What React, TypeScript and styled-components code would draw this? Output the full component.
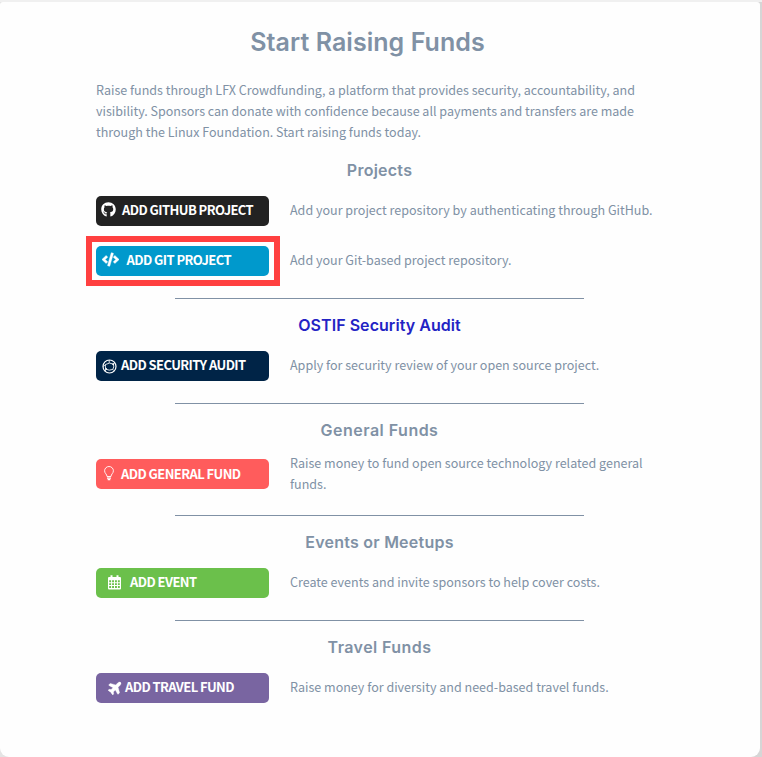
import React from 'react';
import styled, { createGlobalStyle } from 'styled-components';
import { FaCode, FaGithub, FaPlane } from 'react-icons/fa';

const GlobalStyle = createGlobalStyle`
  * { box-sizing: border-box; }
  body {
    margin: 0;
    background: #f0f0f0;
    color: #8091a5;
    font-family: "Noto Sans CJK SC", "Open Sans", sans-serif;
  }
`;

const Page = styled.main`
  height: 757px;
  padding-top: 2px;
  overflow: hidden;
  background: linear-gradient(#f0f0f0 2px, transparent 2px),
    linear-gradient(90deg, #e4e4e4 50%, #d6d6d6 50%);
`;

const Card = styled.article`
  width: 760px;
  height: 755px;
  padding: 20px 97px 0 96px;
  background: #fefefe;
  border-radius: 3px 3px 9px 9px;
`;

const Title = styled.h1`
  margin: 0 24px 17px 0;
  font: 600 25px/40px Inter, sans-serif;
  letter-spacing: 0.05px;
  text-align: center;
`;

const Intro = styled.p`
  margin: 0 0 16px;
  font-size: 12.53px;
  line-height: 21px;
  white-space: nowrap;
`;

const Section = styled.section`
  & + & {
    margin-top: 13px;
  }
  & + &::before {
    content: '';
    display: block;
    width: 409px;
    height: 1px;
    margin: 0 auto 14px;
    background: #8091a5;
  }
`;

const Heading = styled.h2<{ $color?: string; $spacing?: number }>`
  margin: 0 0 3px;
  font: 600 16px/24px Inter, sans-serif;
  letter-spacing: ${(p) => p.$spacing ?? 0}px;
  text-align: center;
  color: ${(p) => p.$color ?? 'inherit'};
`;

const Row = styled.div<{ $tall?: boolean }>`
  display: grid;
  grid-template-columns: 173px 1fr;
  column-gap: 21px;
  align-items: center;
  height: ${(p) => (p.$tall ? 57 : 50)}px;
  padding-top: ${(p) => (p.$tall ? 0 : 1)}px;
`;

const Description = styled.p`
  margin: -2px 0 0;
  font-size: 12.54px;
  line-height: 21px;
  white-space: nowrap;
`;

const Button = styled.button<{
  $bg: string;
  $pad: number;
  $gap: number;
  $bottom?: number;
  $iconLift?: number;
  $marked?: boolean;
}>`
  position: relative;
  display: flex;
  align-items: center;
  gap: ${(p) => p.$gap}px;
  width: 173px;
  height: 30px;
  padding: 0 0 ${(p) => p.$bottom ?? 1}px ${(p) => p.$pad}px;
  border: 0;
  border-radius: 5px;
  background: ${(p) => p.$bg};
  color: #fff;
  font: 700 13px/20px "Noto Sans CJK SC", "Open Sans", sans-serif;
  letter-spacing: -0.58px;
  white-space: nowrap;

  svg {
    flex: none;
    margin-bottom: ${(p) => p.$iconLift ?? 0}px;
  }

  &::after {
    content: '';
    display: ${(p) => (p.$marked ? 'block' : 'none')};
    position: absolute;
    inset: -10px -11px -10px -10px;
    border: 6px solid #ff4040;
  }
`;

const CodeIcon = styled(FaCode)`
  stroke: #fff;
  stroke-width: 16px;
`;

const Plane = styled(FaPlane)`
  transform: rotate(-45deg);
  stroke: #fff;
  stroke-width: 12px;
`;

const AuditIcon = () => (
  <svg width="15" height="17" viewBox="0 -2 15 17" fill="none" stroke="#fff">
    <circle cx="7.5" cy="7.5" r="6.5" strokeWidth="1.2" />
    <path d="M3.5 5.5Q7.5 2.8 11.5 5.2M3.5 5.5Q3 8 4 10.2Q7 12 10.8 10.4Q12.3 8 11.5 5.2M1.3 7.6L3.3 5.5M4 10.2L3.2 12M10.8 10.4L12 11.7M7.2 1V3.8M11.5 5.2L12.7 3.5" strokeWidth=".85" />
    <circle cx="11.2" cy="5.2" r="1" fill="#fff" stroke="none" />
    <circle cx="4" cy="10" r="1" fill="#fff" stroke="none" />
  </svg>
);

const BulbIcon = () => (
  <svg width="10" height="15" viewBox="0 0 10 15" fill="none" stroke="#fff" strokeWidth=".9">
    <path d="M3 10.5C3 8.2.6 7.4.6 4.8A4.4 4.3 0 0 1 9.4 4.8C9.4 7.4 7 8.2 7 10.5Z" />
    <path d="M3 12.1H7M3.7 13.7H6.3" strokeWidth="1.2" />
  </svg>
);

const CalendarIcon = () => (
  <svg width="13" height="15" viewBox="0 0 13 15" fill="#fff">
    <path
      fillRule="evenodd"
      d="M1 2H2.5V.2H4.5V2H8.5V.2H10.5V2H12Q13 2 13 3V13.4Q13 14.4 12 14.4H1Q0 14.4 0 13.4V3Q0 2 1 2ZM1.2 5.3V7.2H3.1V5.3ZM4.1 5.3V7.2H6V5.3ZM7 5.3V7.2H8.9V5.3ZM9.9 5.3V7.2H11.8V5.3ZM1.2 8.2V10.1H3.1V8.2ZM4.1 8.2V10.1H6V8.2ZM7 8.2V10.1H8.9V8.2ZM9.9 8.2V10.1H11.8V8.2ZM1.2 11.1V13H3.1V11.1ZM4.1 11.1V13H6V11.1ZM7 11.1V13H8.9V11.1ZM9.9 11.1V13H11.8V11.1Z"
    />
  </svg>
);

export default function App() {
  return (
    <>
      <GlobalStyle />
      <Page>
        <Card>
          <Title>Start Raising Funds</Title>
          <Intro>
            Raise funds through LFX Crowdfunding, a platform that provides security, accountability, and
            <br />
            visibility. Sponsors can donate with confidence because all payments and transfers are made
            <br />
            through the Linux Foundation. Start raising funds today.
          </Intro>

          <Section>
            <Heading $spacing={0.25}>Projects</Heading>
            <Row>
              <Button $bg="#222222" $pad={5} $gap={6} $iconLift={1}>
                <FaGithub size={15} />
                ADD GITHUB PROJECT
              </Button>
              <Description>Add your project repository by authenticating through GitHub.</Description>
            </Row>
            <Row>
              <Button $bg="#0099cc" $pad={6} $gap={7.5} $iconLift={1} $marked>
                <CodeIcon size={17} />
                ADD GIT PROJECT
              </Button>
              <Description>Add your Git-based project repository.</Description>
            </Row>
          </Section>

          <Section>
            <Heading $color="#2323c4" $spacing={0.05}>OSTIF Security Audit</Heading>
            <Row>
              <Button $bg="#002447" $pad={6} $gap={4}>
                <AuditIcon />
                ADD SECURITY AUDIT
              </Button>
              <Description>Apply for security review of your open source project.</Description>
            </Row>
          </Section>

          <Section>
            <Heading $spacing={0.48}>General Funds</Heading>
            <Row $tall>
              <Button $bg="#ff5c5c" $pad={8} $gap={7} $bottom={0}>
                <BulbIcon />
                ADD GENERAL FUND
              </Button>
              <Description>
                Raise money to fund open source technology related general
                <br />
                funds.
              </Description>
            </Row>
          </Section>

          <Section>
            <Heading $spacing={0.23}>Events or Meetups</Heading>
            <Row>
              <Button $bg="#6bc04b" $pad={12} $gap={9}>
                <CalendarIcon />
                ADD EVENT
              </Button>
              <Description>Create events and invite sponsors to help cover costs.</Description>
            </Row>
          </Section>

          <Section>
            <Heading $spacing={0.42}>Travel Funds</Heading>
            <Row>
              <Button $bg="#7965a1" $pad={11.5} $gap={2.5}>
                <Plane size={15} />
                ADD TRAVEL FUND
              </Button>
              <Description>Raise money for diversity and need-based travel funds.</Description>
            </Row>
          </Section>
        </Card>
      </Page>
    </>
  );
}
